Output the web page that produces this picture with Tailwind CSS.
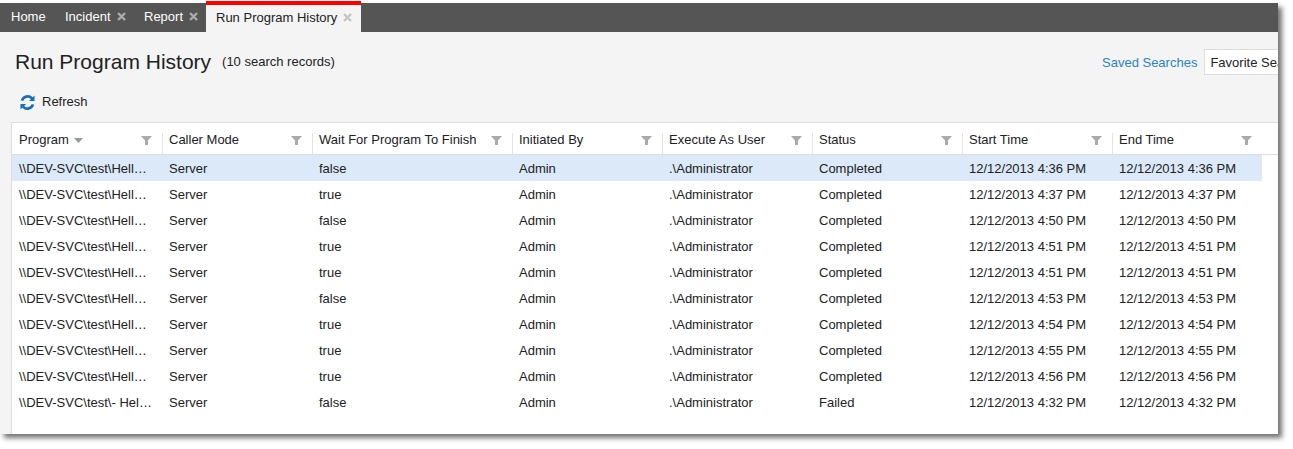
<!DOCTYPE html>
<html lang="en">
<head>
    <meta charset="UTF-8">
    <title>Run Program History</title>
    <script src="https://cdn.jsdelivr.net/npm/@tailwindcss/browser@4"></script>
</head>
<body class="bg-white font-['Liberation_Sans',Arial,sans-serif] text-[13px] text-[#222]">
    <div class="pt-[3px] w-[1293px] h-[449px] overflow-hidden">
        <div class="w-[1278px] h-[431px] flex flex-col bg-[#f4f4f4] shadow-[4px_4px_5px_rgba(0,0,0,0.55)]">
            <!-- tabs -->
            <div class="h-[29px] shrink-0 bg-[#555] flex items-start text-white">
                <div class="h-[29px] w-[55px] pl-[11px] pb-[2px] flex items-center">Home</div>
                <div class="h-[29px] w-[79px] pl-[10px] pb-[2px] flex items-center gap-[6px]">
                    <span>Incident</span>
                    <svg class="w-[9px] h-[9px]" viewBox="0 0 9 9" stroke="#aaa" stroke-width="2.4"><path d="M1 1l7 7M8 1L1 8"/></svg>
                </div>
                <div class="h-[29px] w-[72px] pl-[10px] pb-[2px] flex items-center gap-[6px]">
                    <span>Report</span>
                    <svg class="w-[9px] h-[9px]" viewBox="0 0 9 9" stroke="#aaa" stroke-width="2.4"><path d="M1 1l7 7M8 1L1 8"/></svg>
                </div>
                <div class="h-[31px] -mt-[2px] w-[155px] pl-[10px] pb-[2px] border-t-4 border-[#f00] bg-[#f4f4f4] text-[#222] flex items-center gap-[6px]">
                    <span>Run Program History</span>
                    <svg class="w-[9px] h-[9px]" viewBox="0 0 9 9" stroke="#c4c4c4" stroke-width="2.4"><path d="M1 1l7 7M8 1L1 8"/></svg>
                </div>
            </div>

            <!-- title -->
            <div class="h-[60px] shrink-0 flex items-center justify-between pl-[15px] overflow-hidden">
                <div class="flex items-center gap-[11px]">
                    <h1 class="text-[21px] text-[#222]">Run Program History</h1>
                    <span>(10 search records)</span>
                </div>
                <div class="flex items-center gap-[7px] w-[176px] shrink-0">
                    <a class="text-[#2b84c0] whitespace-nowrap pt-[1px]">Saved Searches</a>
                    <div class="w-[91px] shrink-0 h-[26px] pl-[5px] pt-[1px] flex items-center bg-white border border-[#ddd] whitespace-nowrap overflow-hidden">Favorite Searches</div>
                </div>
            </div>

            <!-- toolbar -->
            <div class="h-[18px] mt-[1px] shrink-0 pl-[20px] flex items-center gap-[7px]">
                <svg class="w-[15px] h-[15px]" viewBox="0 0 16 16" fill="#1a6fb5">
                    <path d="M13.6 2.4 15.5.5V6.5H9.5l2.1-2.1A5 5 0 0 0 3.4 6.3L.8 5.7a7.6 7.6 0 0 1 12.8-3.3Z"/>
                    <path d="M2.4 13.6.5 15.5V9.5h6l-2.1 2.1a5 5 0 0 0 8.2-1.9l2.6.6a7.6 7.6 0 0 1-12.8 3.3Z"/>
                </svg>
                <span>Refresh</span>
            </div>

            <!-- grid -->
            <div class="flex-1 ml-[11px] mt-[11px] bg-white border-l border-t border-[#ddd] min-h-0 overflow-hidden">
                <div id="head" class="h-[32px] border-b border-[#ddd] flex"></div>
                <div id="rows"></div>
            </div>
        </div>
    </div>
    <script>
        const columns = ['Program', 'Caller Mode', 'Wait For Program To Finish', 'Initiated By', 'Execute As User', 'Status', 'Start Time', 'End Time'];
        const widths = ['w-[150px]', 'w-[150px]', 'w-[200px]', 'w-[150px]', 'w-[150px]', 'w-[150px]', 'w-[150px]', 'w-[150px]'];
        const h = '\\\\DEV-SVC\\test\\Hell…';
        const rows = [
            [h, 'false', 'Completed', '4:36'],
            [h, 'true', 'Completed', '4:37'],
            [h, 'false', 'Completed', '4:50'],
            [h, 'true', 'Completed', '4:51'],
            [h, 'true', 'Completed', '4:51'],
            [h, 'false', 'Completed', '4:53'],
            [h, 'true', 'Completed', '4:54'],
            [h, 'true', 'Completed', '4:55'],
            [h, 'true', 'Completed', '4:56'],
            ['\\\\DEV-SVC\\test\\- Hel…', 'false', 'Failed', '4:32'],
        ];

        const funnel = '<svg class="absolute right-[10px] top-[13px] w-[11px] h-[9px]" viewBox="0 0 11 9" fill="#aaa"><path d="M0 0h11L7 4.5V9H4V4.5Z"/></svg>';
        document.getElementById('head').innerHTML = columns.map((c, i) => `
            <div class="relative ${widths[i]} shrink-0 pl-[7px] pt-[3px] flex items-center gap-[5px]">
                ${i ? '<span class="absolute left-0 bottom-0 w-px h-[21px] bg-[#e4e4e4]"></span>' : ''}
                <span>${c}</span>
                ${i === 0 ? '<svg class="w-[9px] h-[5px]" viewBox="0 0 9 5" fill="#999"><path d="M0 0h9L4.5 5Z"/></svg>' : ''}
                ${funnel}
            </div>`).join('');

        document.getElementById('rows').innerHTML = rows.map((r, i) => {
            const stamp = `12/12/2013 ${r[3]} PM`;
            const cells = [r[0], 'Server', r[1], 'Admin', '.\\Administrator', r[2], stamp, stamp];
            return `<div class="h-[26px] w-[1250px] flex items-center ${i === 0 ? 'bg-[#dbe9f8]' : ''}">` +
                cells.map((t, j) => `<div class="${widths[j]} shrink-0 pl-[7px] pt-[1px] whitespace-nowrap">${t}</div>`).join('') +
                '</div>';
        }).join('');
    </script>
</body>
</html>
